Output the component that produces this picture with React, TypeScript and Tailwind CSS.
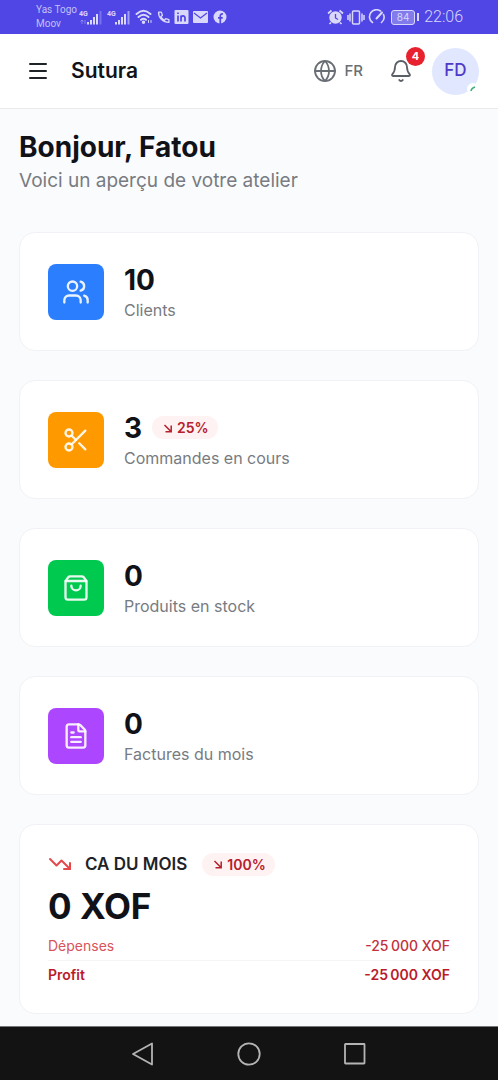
import type { ReactNode } from "react";
import {
  Bell,
  FileText,
  Globe,
  Menu,
  Scissors,
  ShoppingBag,
  TrendingDown,
  Users,
  type LucideIcon,
} from "lucide-react";

interface Stat {
  label: string;
  value: string;
  icon: LucideIcon;
  color: string;
  trend?: string;
}

const stats: Stat[] = [
  { label: "Clients", value: "10", icon: Users, color: "bg-[#2b7fff]" },
  {
    label: "Commandes en cours",
    value: "3",
    icon: Scissors,
    color: "bg-[#fe9a00]",
    trend: "25%",
  },
  {
    label: "Produits en stock",
    value: "0",
    icon: ShoppingBag,
    color: "bg-[#00c950]",
  },
  {
    label: "Factures du mois",
    value: "0",
    icon: FileText,
    color: "bg-[#ad46ff]",
  },
];

function Signal({ dim }: { dim?: boolean }) {
  return (
    <svg width="24" height="17" viewBox="0 0 24 17" fill="currentColor">
      <text x="0" y="7" fontSize="7" fontWeight="700" fontFamily="Roboto">
        4G
      </text>
      {dim && (
        <path
          d="M3 11v4M1.500 12.500L3 11l1.500 1.500M6 11v4"
          stroke="currentColor"
          strokeWidth="0.800"
          fill="none"
          opacity="0.5"
        />
      )}
      <path d="M8 13h2v2.500H8zM11 11h2v4.500h-2zM14 8h2v7.500h-2zM17 5h2v10.500h-2z" />
      <path d="M20.500 2h2v13.500h-2z" opacity={dim ? 0.3 : 0.6} />
    </svg>
  );
}

function StatusBar() {
  return (
    <div className="flex h-[34px] items-center justify-between bg-[#4f46e5] pl-9 pr-[35px] text-[#d9d8fb]">
      <div className="flex items-center gap-1">
        <div className="w-[39px] whitespace-nowrap font-[Roboto] text-[10px] leading-[14px] text-[#c2c0f7]">
          <div>Yas Togo</div>
          <div>Moov</div>
        </div>
        <Signal dim />
        <Signal />
        {/* Wifi */}
        <svg
          width="18"
          height="16"
          viewBox="0 0 18 16"
          fill="none"
          stroke="currentColor"
          strokeWidth="1.900"
          strokeLinecap="round"
        >
          <path d="M1.500 5Q8.500-1.500 15.500 5M3.500 8Q8.500 3.500 13.500 8M6 10.800Q8.500 8.800 11 10.800" />
          <circle cx="8.500" cy="13.300" r="0.800" fill="currentColor" />
          <path d="M13.500 11.500v2M16 11.500v2" strokeWidth="1" />
        </svg>
        {/* Phone */}
        <svg
          width="13"
          height="14"
          viewBox="0 0 24 24"
          fill="none"
          stroke="currentColor"
          strokeWidth="2.500"
          strokeLinejoin="round"
        >
          <path d="M3 3h5l2 6-3 2a15 15 0 0 0 7 7l2-3 6 2v5C11 22 2 13 3 3z" />
        </svg>
        {/* LinkedIn */}
        <svg width="15" height="16" viewBox="1.500 0 15 16">
          <rect x="2" y="1" width="14" height="14" rx="1" fill="currentColor" />
          <path
            d="M5.500 6.500V12.500M5.500 3.500v1.500M8.500 6.500v6M8.500 9c0-2.500 4-3 4 0v3.500"
            stroke="#4f46e5"
            strokeWidth="1.700"
            fill="none"
          />
        </svg>
        {/* Mail */}
        <svg width="16" height="14" viewBox="0 0 16 14">
          <rect y="1" width="15" height="12" rx="1" fill="currentColor" />
          <path
            d="M1 3l6.500 5L14 3"
            stroke="#4f46e5"
            strokeWidth="1.200"
            fill="none"
          />
        </svg>
        {/* Facebook */}
        <svg width="14" height="14" viewBox="0 0 14 14">
          <circle cx="7" cy="7" r="6.500" fill="currentColor" />
          <path
            d="M7.300 14V6c0-1.600.8-2.200 2.700-2M5 7.800h4.700"
            stroke="#4f46e5"
            strokeWidth="1.700"
            fill="none"
          />
        </svg>
      </div>

      <div className="flex items-center gap-[3px]">
        {/* Alarm */}
        <svg width="17" height="16" viewBox="0 0 17 16">
          <circle cx="8.500" cy="8.500" r="6.200" fill="currentColor" />
          <path
            d="M1 4.500L4.500 1.500M16 4.500l-3.500-3M4 13.500l-1.500 1.500M13 13.500l1.500 1.500"
            stroke="currentColor"
            strokeWidth="1.700"
          />
          <path
            d="M8.500 5v4l2.500 1.500"
            stroke="#4f46e5"
            strokeWidth="1.300"
            fill="none"
          />
        </svg>
        {/* Vibrate */}
        <svg
          width="18"
          height="15"
          viewBox="0 0 18 15"
          fill="none"
          stroke="currentColor"
          strokeWidth="1.500"
        >
          <rect x="5.500" y="1" width="7" height="13" rx="1" />
          <path d="M3 3.500v8M1 5v5M15 3.500v8M17 5v5" />
        </svg>
        {/* Gauge */}
        <svg
          width="18"
          height="16"
          viewBox="0 0 18 16"
          fill="none"
          stroke="currentColor"
          strokeWidth="1.600"
          strokeLinecap="round"
        >
          <path d="M4.500 13.500A7 7 0 0 1 12.500 2M15.500 5.500a7 7 0 0 1-2 8" />
          <path d="M8.500 9.500L14 3.500" strokeWidth="2" />
        </svg>
        {/* Battery */}
        <div className="ml-0.5 flex items-center gap-0.5">
          <div className="flex h-[15px] w-6 items-center justify-center rounded-[3px] border border-current bg-[#817bec] text-[10px] leading-3">
            84
          </div>
          <div className="h-2 w-0.5 bg-current" />
        </div>
        <time className="ml-0.5 font-[Roboto] text-base font-light">22:06</time>
      </div>
    </div>
  );
}

function TrendArrow() {
  return (
    <svg
      width="12"
      height="12"
      viewBox="0 0 12 12"
      fill="none"
      stroke="currentColor"
      strokeWidth="1.500"
    >
      <path d="M2.500 3l6.500 6.500M9.200 3.500v6.200H3.500" />
    </svg>
  );
}

function TrendBadge({ children }: { children: ReactNode }) {
  return (
    <span className="inline-flex h-[23px] items-center gap-[3px] rounded-full bg-[#fef2f2] pl-2.5 pr-[9px] text-[14px] font-semibold text-[#b5202c]">
      <TrendArrow />
      {children}
    </span>
  );
}

function Header() {
  return (
    <header className="flex h-[75px] items-center justify-between border-b border-[#e9eaec] bg-white pl-[26px] pr-[19px]">
      <div className="flex items-center gap-[21px]">
        <button type="button" aria-label="Menu" className="text-[#1f2328]">
          <Menu size={24} />
        </button>
        <span className="text-[21px] font-semibold text-[#111318]">Sutura</span>
      </div>
      <div className="flex items-center">
        <button
          type="button"
          className="flex items-center gap-[7px] text-[15px] font-medium text-[#6a6e75]"
        >
          <Globe size={24} strokeWidth={1.8} />
          FR
        </button>
        <button
          type="button"
          aria-label="Notifications"
          className="relative ml-[26px] text-[#5b5f66]"
        >
          <Bell size={24} strokeWidth={1.8} />
          <span className="absolute -right-3 -top-3 flex size-[19px] items-center justify-center rounded-full bg-[#e7222e] text-[11px] font-bold text-white">
            4
          </span>
        </button>
        <button
          type="button"
          className="relative ml-[19px] size-[47px] rounded-full bg-[#e0e7ff] text-[17px] font-medium text-[#4f39c6]"
        >
          FD
          <span className="absolute bottom-0 right-0 flex size-3 items-center justify-center rounded-full bg-white">
            <svg width="8" height="8" viewBox="0 0 8 8" fill="none">
              <path d="M2 6Q2.500 3 6 2" stroke="#3fae78" strokeWidth="1.500" />
            </svg>
          </span>
        </button>
      </div>
    </header>
  );
}

function StatCard({ label, value, icon: Icon, color, trend }: Stat) {
  return (
    <div className="flex h-[119px] items-center gap-5 rounded-2xl border border-[#f1f2f5] bg-white px-7">
      <div
        className={`flex size-14 shrink-0 items-center justify-center rounded-lg text-white/90 ${color}`}
      >
        <Icon size={28} />
      </div>
      <div>
        <div className="flex items-center gap-2.5">
          <span className="text-[28px] font-bold leading-9 text-[#101218]">
            {value}
          </span>
          {trend && <TrendBadge>{trend}</TrendBadge>}
        </div>
        <p className="text-base leading-6 text-[#787b81]">{label}</p>
      </div>
    </div>
  );
}

function RevenueCard() {
  return (
    <section className="rounded-2xl border border-[#f1f2f5] bg-white px-7 pb-6 pt-[27px]">
      <div className="flex h-6 items-center">
        <TrendingDown size={24} className="text-[#e5484d]" />
        <h2 className="ml-[13px] text-[17px] font-semibold leading-6 text-[#1f2328]">
          CA DU MOIS
        </h2>
        <div className="ml-[15px] flex">
          <TrendBadge>100%</TrendBadge>
        </div>
      </div>
      <p className="mt-2 text-[35px] font-bold leading-[44px] text-[#101218]">
        0 XOF
      </p>
      <dl className="mt-1 text-[14px] leading-7">
        <div className="flex justify-between">
          <dt className="text-[#d9535b]">Dépenses</dt>
          <dd className="font-medium text-[#c2303b]">-25&#8239;000 XOF</dd>
        </div>
        <div className="flex justify-between border-t border-[#f5f5f6] font-semibold text-[#bb1a2a]">
          <dt>Profit</dt>
          <dd>-25&#8239;000 XOF</dd>
        </div>
      </dl>
    </section>
  );
}

function NavBar() {
  return (
    <nav className="mt-auto flex h-[54px] items-center justify-center gap-[82px] border-t border-[#77777a] bg-[#131313] text-[#b4b4b4]">
      <button type="button" aria-label="Retour">
        <svg
          width="24"
          height="24"
          viewBox="0 0 24 24"
          fill="none"
          stroke="currentColor"
          strokeWidth="1.800"
          strokeLinejoin="round"
        >
          <path d="M21 1.500v21L2 12z" />
        </svg>
      </button>
      <button type="button" aria-label="Accueil">
        <svg
          width="24"
          height="24"
          viewBox="0 0 24 24"
          fill="none"
          stroke="currentColor"
          strokeWidth="1.800"
        >
          <circle cx="12" cy="12" r="10.700" />
        </svg>
      </button>
      <button type="button" aria-label="Applications récentes">
        <svg
          width="24"
          height="24"
          viewBox="0 0 24 24"
          fill="none"
          stroke="currentColor"
          strokeWidth="1.800"
        >
          <rect x="2" y="2" width="19.500" height="19.500" rx="0.500" />
        </svg>
      </button>
    </nav>
  );
}

export default function App() {
  return (
    <div className="flex min-h-screen flex-col bg-[#fafbfd] font-[Inter,sans-serif]">
      <StatusBar />
      <Header />
      <main className="px-[19px] pb-3 pt-5">
        <h1 className="text-[28px] font-bold leading-9 text-[#101218]">
          Bonjour, Fatou
        </h1>
        <p className="mt-0.5 text-[19px] leading-7 text-[#787b81]">
          Voici un aperçu de votre atelier
        </p>
        <div className="mt-[37px] flex flex-col gap-[29px]">
          {stats.map((s) => (
            <StatCard key={s.label} {...s} />
          ))}
          <RevenueCard />
        </div>
      </main>
      <NavBar />
    </div>
  );
}
